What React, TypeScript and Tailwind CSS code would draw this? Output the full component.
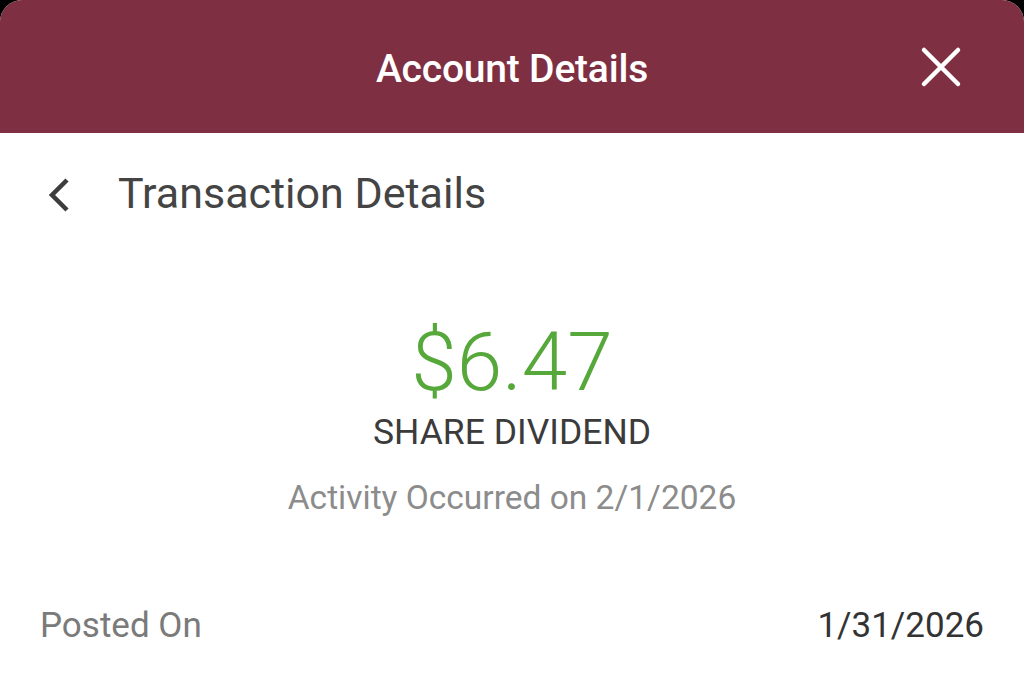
export default function App() {
  return (
    <div
      className="h-[676px] w-[1024px] overflow-hidden bg-black"
      style={{ fontFamily: "Roboto, 'Noto Sans', sans-serif" }}
    >
      <div className="flex h-full flex-col overflow-hidden rounded-t-[22px] bg-white">
        <header className="relative flex h-[133px] shrink-0 justify-center bg-[#7f2f42] pt-[50px]">
          <h1 className="text-[39px] font-medium leading-none tracking-[-0.2px] text-white">Account Details</h1>
          <button className="absolute right-[60px] top-[44px] flex h-[46px] w-[46px] items-center justify-center">
            <svg width="42" height="42" viewBox="0 0 42 42" fill="none">
              <path d="M4 4L38 38M38 4L4 38" stroke="white" strokeWidth="4.5" strokeLinecap="round" />
            </svg>
          </button>
        </header>

        <div className="mt-[39px] flex items-center px-[46px]">
          <svg width="26" height="36" viewBox="0 0 26 36" fill="none" className="mr-[46px] mt-[2px]">
            <path d="M21 3L6 18L21 33" stroke="#3d3d3d" strokeWidth="4.5" />
          </svg>
          <h2 className="text-[43px] leading-none text-[#444444]">Transaction Details</h2>
        </div>

        <div className="mt-[106px] flex flex-col items-center">
          <div className="text-[82px] font-light leading-none text-[#56a83b]">$6.47</div>
          <div className="mt-[12px] text-[35.5px] leading-none text-[#3b3b3b]">SHARE DIVIDEND</div>
          <div className="mt-[30px] text-[33.5px] leading-none text-[#8c8c8c]">Activity Occurred on 2/1/2026</div>
        </div>

        <div className="mt-[94px] flex items-center justify-between px-[40px] text-[35px] leading-none">
          <span className="text-[#7a7a7a]">Posted On</span>
          <span className="text-[#333333]">1/31/2026</span>
        </div>
      </div>
    </div>
  );
}
